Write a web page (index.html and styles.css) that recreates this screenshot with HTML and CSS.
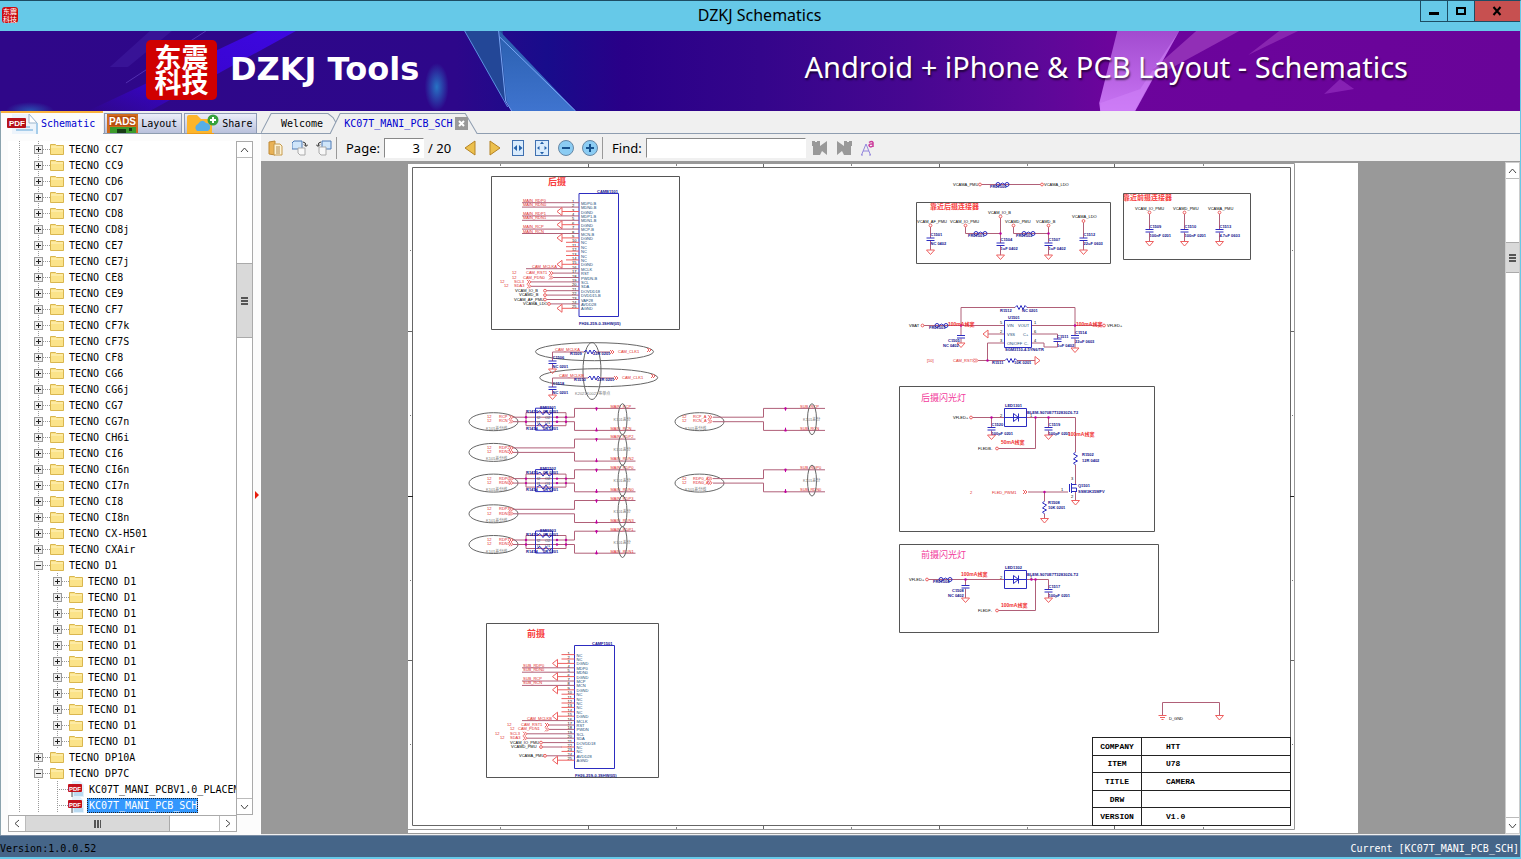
FILE: index.html
```html
<!DOCTYPE html>
<html lang="en">
<head>
    <meta charset="UTF-8">
    <meta name="viewport" content="width=device-width, initial-scale=1.0">
    <title>DZKJ Schematics</title>
    <link rel="stylesheet" href="styles.css">
</head>
<body>
    <header class="title-bar">
        <span class="app-icon">东震<br>科技</span>
        <h1>DZKJ Schematics</h1>
        <div class="window-buttons">
            <button aria-label="Minimize"><svg width="10" height="10"><path d="M0 6h10v3H0z"/></svg></button>
            <button aria-label="Maximize"><svg width="10" height="10"><path d="M1 2h8v6H1z" fill="none" stroke="#000" stroke-width="2"/></svg></button>
            <button class="close" aria-label="Close"><svg width="10" height="10"><path d="M1.500 1l7 8M8.500 1l-7 8" stroke="#000" stroke-width="2"/></svg></button>
        </div>
    </header>

    <div class="banner">
        <svg class="banner-art" viewBox="0 0 1521 80" preserveAspectRatio="none">
            <defs>
                <linearGradient id="bg">
                    <stop offset="0" stop-color="#2f0789"/>
                    <stop offset=".3" stop-color="#2d078a"/>
                    <stop offset=".36" stop-color="#180c8b"/>
                    <stop offset=".41" stop-color="#290088"/>
                    <stop offset=".5" stop-color="#34058b"/>
                    <stop offset=".6" stop-color="#470791"/>
                    <stop offset=".68" stop-color="#5b0898"/>
                    <stop offset=".73" stop-color="#6c049c"/>
                    <stop offset="1" stop-color="#690499"/>
                </linearGradient>
                <linearGradient id="ray" x1="1" y1="0" x2="0" y2="1">
                    <stop offset="0" stop-color="#3d08e0"/>
                    <stop offset=".6" stop-color="#3904cf"/>
                    <stop offset="1" stop-color="#3904cf" stop-opacity="0"/>
                </linearGradient>
                <linearGradient id="gem" x1="0" y1="0" x2="0" y2="1">
                    <stop offset="0" stop-color="#2a5fae"/>
                    <stop offset="1" stop-color="#3f74cf"/>
                </linearGradient>
                <linearGradient id="pink" x1="0" y1="0" x2="0" y2="1">
                    <stop offset="0" stop-color="#a24bcf"/>
                    <stop offset="1" stop-color="#c975f4"/>
                </linearGradient>
                <radialGradient id="glow">
                    <stop offset="0" stop-color="#2773c4"/>
                    <stop offset="1" stop-color="#2773c4" stop-opacity="0"/>
                </radialGradient>
            </defs>
            <rect width="1521" height="80" fill="url(#bg)"/>
            <path d="M258 0h38L150 80H88z" fill="url(#ray)"/>
            <path d="M150 0h22L128 36h-18z" fill="#4a2ab0" opacity=".35"/>
            <path d="M206 0L126 52" stroke="#6342c4" opacity=".7"/>
            <ellipse cx="437" cy="56" rx="12" ry="24" fill="url(#glow)"/>
            <ellipse cx="30" cy="80" rx="24" ry="9" fill="url(#glow)" opacity=".7"/>
            <path d="M465 0h38l5 73-8-11z" fill="#234797"/>
            <path d="M465 0l43 76" stroke="#5b92e2" fill="none"/>
            <path d="M500 0l76 80h-64l-5-10z" fill="url(#gem)"/>
            <path d="M500 6l76 74M499 0l7 70 6 10" stroke="#79a6f5" fill="none"/>
            <path d="M1118 0h62l-44 80h-35l-1-8z" fill="url(#pink)"/>
            <path d="M1101 72l40-14 39-58-45 80h-34z" fill="#d184fa" opacity=".5"/>
            <path d="M1197 0h43l-77 42-10-3z" fill="#a646c5" opacity=".65"/>
            <path d="M1280 0h19l-50 24z" fill="#a646c5" opacity=".5"/>
            <path d="M1341 48l14 10-30 5z" fill="#9a35c4" opacity=".6"/>
        </svg>
        <div class="brand">
            <span class="logo">东震<br>科技</span>
            <strong>DZKJ Tools</strong>
        </div>
        <p>Android + iPhone &amp; PCB Layout - Schematics</p>
    </div>

    <main class="workspace">
        <aside class="sidebar">
            <nav class="side-tabs">
                <button class="side-tab active">
                    <svg width="31" height="20" viewBox="0 0 31 20"><path d="M5 0h18l7 8v12H5z" fill="#edf4fb"/><path d="M22 0l8 9h-8z" fill="#fff" stroke="#9bb5cd"/><path d="M30 9v11M9 16h17M9 13h14" stroke="#a7cdea" stroke-width="2"/><rect y="4" width="19" height="10" rx="1" fill="#b7121b"/><text x="2" y="12" class="pdf-text">PDF</text></svg>
                    Schematic
                </button>
                <button class="side-tab">
                    <svg width="31" height="19" viewBox="0 0 31 19"><rect width="31" height="19" fill="#cf6a1d"/><path d="M2 2h27v10H2z" fill="#b84e0e"/><text x="2" y="11" class="pads-text">PADS</text><path d="M3 13h26v6H3z" fill="#3b9b2c"/><path d="M10 15h9v4h-9zM22 14h3v3h-3z" fill="#173c16"/></svg>
                    Layout
                </button>
                <button class="side-tab">
                    <svg width="32" height="20" viewBox="0 0 32 20"><path d="M0 3q0-2 2-2h8l4 4h11v15H0z" fill="#fdb52b"/><path d="M0 19h27v1H0z" fill="#e99a1b"/><path d="M10 17a4 4 0 0 1 1-7q4-6 8-1 5 0 4 6l-2 2z" fill="#56aee8"/><circle cx="26" cy="6" r="5.500" fill="#36a13c"/><path d="M26 3v6M23 6h6" stroke="#fff" stroke-width="2"/></svg>
                    Share
                </button>
            </nav>
            <div class="side-body">
                <div class="tree-box">
                    <ul class="tree" id="tree"></ul>
                    <div class="scrollbar vertical">
                        <button aria-label="Scroll up"><svg width="9" height="6"><path d="M1 5l3.500-4L8 5"/></svg></button>
                        <div class="track"><div class="thumb"></div></div>
                        <button aria-label="Scroll down"><svg width="9" height="6"><path d="M1 1l3.500 4L8 1"/></svg></button>
                    </div>
                </div>
                <div class="scrollbar horizontal">
                    <button aria-label="Scroll left"><svg width="6" height="9"><path d="M5 1L1 4.500 5 8"/></svg></button>
                    <div class="track"><div class="thumb"></div></div>
                    <button aria-label="Scroll right"><svg width="6" height="9"><path d="M1 1l4 3.500L1 8"/></svg></button>
                </div>
            </div>
            <span class="splitter"></span>
        </aside>

        <section class="content">
            <nav class="doc-tabs">
                <button class="doc-tab">
                    <svg viewBox="0 0 76 20" preserveAspectRatio="none"><path d="M0 20L10 .500h56l5 4 5 9"/></svg>
                    <span>Welcome</span>
                </button>
                <button class="doc-tab active">
                    <svg viewBox="0 0 146 20" preserveAspectRatio="none"><path d="M0 20L10 .500h124L146 20"/></svg>
                    <span>KC07T_MANI_PCB_SCH</span>
                    <i class="tab-close"><svg width="13" height="13"><path d="M4 4l5 5M9 4L4 9" stroke="#fff" stroke-width="2"/></svg></i>
                </button>
            </nav>

            <div class="toolbar">
                <button class="tool" aria-label="Copy"><svg width="16" height="16"><path d="M1 2l6-1v14l-6-1z" fill="#e9b256" stroke="#c08a37"/><path d="M6 4h6l2 2v9H6z" fill="#fdf3d5" stroke="#c69a4c"/><path d="M8 7h4M8 9h4M8 11h4M8 13h4" stroke="#b08a50"/></svg></button>
                <button class="tool" aria-label="Rotate right"><svg width="16" height="16"><path d="M2 1h8v8H0V3z" fill="#cfe5fa" stroke="#4e7bb5"/><path d="M6 8h7v7H8l-2-2z" fill="#f8f8f8" stroke="#aaa"/><path d="M11 2q3 0 3 4M12 4.500l2 2 2-2" fill="none" stroke="#333"/></svg></button>
                <button class="tool" aria-label="Rotate left"><svg width="16" height="16"><path d="M6 1h9v8H8L6 7z" fill="#cfe5fa" stroke="#4e7bb5"/><path d="M3 7h7v8H5l-2-2z" fill="#f8f8f8" stroke="#aaa"/><path d="M5 2Q2 2 2 6M0 4.500l2 2 2-2" fill="none" stroke="#333"/></svg></button>
                <span class="separator"></span>
                <label for="page">Page:</label>
                <input type="text" id="page" value="3">
                <span class="total">/ 20</span>
                <button class="tool" aria-label="Previous page"><svg width="16" height="16"><path d="M13 1v14L3 8z" fill="#ecc04e" stroke="#b58324"/></svg></button>
                <button class="tool" aria-label="Next page"><svg width="16" height="16"><path d="M4 1v14l10-7z" fill="#ecc04e" stroke="#b58324"/></svg></button>
                <button class="tool" aria-label="Fit width"><svg width="16" height="16"><rect x="2.500" y=".500" width="11" height="15" fill="#d9ebfc" stroke="#3f70b0"/><path d="M7 5v6L3.500 8zM9 5v6l3.500-3z" fill="#2461aa"/></svg></button>
                <button class="tool" aria-label="Fit page"><svg width="16" height="16"><rect x="1.500" y=".500" width="13" height="15" fill="#d9ebfc" stroke="#3f70b0"/><path d="M8 1.500L10 4H6zM8 14.500L6 12h4zM3 8l2.500-2v4zM13 8l-2.500-2v4z" fill="#2461aa"/></svg></button>
                <button class="tool" aria-label="Zoom out"><svg width="16" height="16"><circle cx="8" cy="8" r="7.500" fill="#8bccf3" stroke="#6788a5"/><path d="M4 8h8" stroke="#16518c" stroke-width="2"/></svg></button>
                <button class="tool" aria-label="Zoom in"><svg width="16" height="16"><circle cx="8" cy="8" r="7.500" fill="#8bccf3" stroke="#6788a5"/><path d="M4 8h8M8 4v8" stroke="#16518c" stroke-width="2"/></svg></button>
                <span class="separator"></span>
                <label for="find">Find:</label>
                <input type="text" id="find">
                <button class="tool" aria-label="Find previous"><svg width="16" height="16"><path d="M0 1h3v1h2V1h3v5l7-5v14l-5-4-2 4H1V6H0z" fill="#999"/></svg></button>
                <button class="tool" aria-label="Find next"><svg width="16" height="16"><path d="M16 1h-3v1h-2V1H8v5L1 1v14l5-4 2 4h7V6h1z" fill="#999"/></svg></button>
                <button class="tool" aria-label="Match case"><svg width="16" height="16"><path d="M1.500 15L6 4l4.500 11M3 11h6M1 15h2M9 15h2" fill="none" stroke="#9285dc"/><path d="M9 2.500q3-2 4 0V7M13 4q-4-.500-4 1.500Q10 8 13 6" fill="none" stroke="#cc3b9b" stroke-width="1.500"/></svg></button>
            </div>

            <div class="viewer">
                <div class="canvas">
                    <div class="sheet">
                        <svg class="schematic" id="schematic" viewBox="408 163 950 670"></svg>
                        <table class="title-block">
                            <tr><th>COMPANY</th><td>HTT</td></tr>
                            <tr><th>ITEM</th><td>U78</td></tr>
                            <tr><th>TITLE</th><td>CAMERA</td></tr>
                            <tr><th>DRW</th><td></td></tr>
                            <tr><th>VERSION</th><td>V1.0</td></tr>
                        </table>
                    </div>
                </div>
                <div class="scrollbar vertical">
                    <button aria-label="Page up"><svg width="9" height="6"><path d="M1 5l3.500-4L8 5"/></svg></button>
                    <div class="track"><div class="thumb"></div></div>
                    <button aria-label="Page down"><svg width="9" height="6"><path d="M1 1l3.500 4L8 1"/></svg></button>
                </div>
            </div>
        </section>
    </main>

    <footer class="status-bar">
        <span class="version">Version:1.0.0.52</span>
        <span>Current [KC07T_MANI_PCB_SCH]</span>
    </footer>

    <script src="script.js"></script>
</body>
</html>
```

FILE: styles.css
```css
* {
    box-sizing: border-box;
}

body {
    margin: 0;
    height: 100vh;
    display: flex;
    flex-direction: column;
    overflow: hidden;
    background-color: #f0f0f0;
    border-top: 1px solid #1d4c63;
    border-right: 1px solid #66c9e8;
    border-bottom: 2px solid #66c9e8;
    font-family: "DejaVu Sans Mono", "Noto Sans CJK SC", monospace;
    font-size: 10px;
    color: #000;
}

button {
    margin: 0;
    padding: 0;
    border: none;
    background: none;
    font: inherit;
    color: inherit;
}

svg {
    display: block;
    flex: none;
}

/* Title bar */
.title-bar {
    flex: none;
    height: 30px;
    display: flex;
    justify-content: space-between;
    background-color: #66c9e8;
}

.title-bar h1 {
    margin: 0;
    font: 16px/29px "Noto Sans", sans-serif;
}

.app-icon {
    width: 16px;
    height: 16px;
    margin: 6px 81px 0 2px;
    border-radius: 3px;
    background-color: #cc0c10;
    color: #fff;
    font: 7px/8px "Noto Sans CJK SC", sans-serif;
    text-align: center;
}

.window-buttons {
    display: flex;
    height: 21px;
    border: 1px solid #1d4c63;
    border-top: none;
    border-right: none;
}

.window-buttons button {
    width: 27px;
    display: flex;
    align-items: center;
    justify-content: center;
    border-right: 1px solid #1d4c63;
}

.window-buttons .close {
    width: 45px;
    border-right: none;
    background-color: #c75050;
}

/* Banner */
.banner {
    position: relative;
    flex: none;
    height: 80px;
    display: flex;
    align-items: center;
    justify-content: space-between;
    padding: 0 112px 0 146px;
    color: #fff;
}

.banner-art {
    position: absolute;
    left: 0;
    top: 0;
    width: 100%;
    height: 100%;
}

.brand {
    position: relative;
    display: flex;
    align-items: flex-start;
    gap: 13px;
    margin-bottom: 2px;
}

.brand strong {
    font: bold 32px/58px "DejaVu Sans", sans-serif;
}

.logo {
    width: 71px;
    height: 60px;
    padding: 4px 0;
    border-radius: 5px;
    background-color: #d00000;
    font: bold 27px/25px "Noto Sans CJK SC", sans-serif;
    text-align: center;
}

.banner p {
    position: relative;
    margin: 0 0 9px;
    font: 29px/40px "Noto Sans", sans-serif;
    text-shadow: 1px 2px 2px rgba(0, 0, 0, 0.6);
}

/* Workspace */
.workspace {
    flex: 1;
    min-height: 0;
    display: flex;
}

.sidebar {
    position: relative;
    flex: none;
    width: 261px;
    display: flex;
    flex-direction: column;
    border-left: 1px solid #8ba3ae;
}

.side-tabs {
    flex: none;
    height: 23px;
    display: flex;
    align-items: flex-end;
    gap: 2px;
    border-bottom: 1px solid #8e9db0;
}

.side-tab {
    height: 20px;
    display: flex;
    align-items: center;
    gap: 3px;
    padding: 0 4px 0 2px;
    border: 1px solid #8e9bb5;
    border-bottom: none;
    background: linear-gradient(#eceef9, #b9c1dc);
}

.side-tab.active {
    height: 23px;
    margin-bottom: -1px;
    margin-right: -1px;
    padding: 0 8px 0 6px;
    border: none;
    border-top: 2px solid #f9b13c;
    background: #fcfcfc;
    color: #0000d0;
}

.pdf-text {
    font: bold 8px "Liberation Sans", sans-serif;
    fill: #fff;
}

.pads-text {
    font: bold 10px "Liberation Sans", sans-serif;
    fill: #fff;
}

.side-body {
    flex: 1;
    min-height: 0;
    padding: 7px 7px 3px;
    background-color: #fcfcfc;
    border-right: 1px solid #fff;
}

.side-body,
.tree-box {
    display: flex;
    flex-direction: column;
}

.tree-box {
    flex: 1;
    min-height: 0;
    flex-direction: row;
    background-color: #fff;
}

.tree {
    flex: 1;
    min-width: 0;
    margin: 0;
    padding: 0;
    overflow: hidden;
    list-style: none;
}

.tree li {
    height: 16px;
    display: flex;
    align-items: center;
    padding-left: 26px;
    white-space: pre;
    background:
        repeating-linear-gradient(#999 0 1px, transparent 1px 2px) 11px 0 / 1px 100% no-repeat,
        repeating-linear-gradient(#999 0 1px, transparent 1px 2px) 30px 0 / 1px 100% no-repeat;
}

.tree .level-2 {
    padding-left: 45px;
    background:
        repeating-linear-gradient(#999 0 1px, transparent 1px 2px) 11px 0 / 1px 100% no-repeat,
        repeating-linear-gradient(#999 0 1px, transparent 1px 2px) 30px 0 / 1px 100% no-repeat,
        repeating-linear-gradient(#999 0 1px, transparent 1px 2px) 49px 0 / 1px 100% no-repeat;
}

.tree .expander {
    flex: none;
    width: 9px;
    height: 9px;
}

.tree .dots {
    flex: none;
    width: 7px;
    height: 1px;
    background: repeating-linear-gradient(90deg, #999 0 1px, transparent 1px 2px);
}

.tree .file .dots {
    width: 11px;
    margin-left: 4px;
}

.tree .name {
    margin-left: 3px;
    padding: 0 1px 0 2px;
    line-height: 15px;
}

.tree .selected .name {
    background-color: #3397fd;
    color: #fff;
    outline: 1px dotted #222;
    outline-offset: -1px;
}

/* Scrollbars */
.scrollbar {
    flex: none;
    display: flex;
    background-color: #fff;
    border: 1px solid #aaa;
}

.scrollbar button {
    flex: none;
    display: flex;
    align-items: center;
    justify-content: center;
}

.scrollbar button path {
    fill: none;
    stroke: #444;
    stroke-width: 1;
}

.scrollbar .track {
    flex: 1;
    min-height: 0;
    border: 0 solid #bbb;
}

.scrollbar .thumb {
    display: flex;
    background-color: #d9d9d9;
    border: 0 solid #aaa;
}

.scrollbar .thumb::after {
    content: "";
    width: 7px;
    height: 8px;
    margin: auto;
    background: repeating-linear-gradient(#555 0 2px, transparent 2px 3px);
}

.vertical {
    width: 17px;
    flex-direction: column;
}

.vertical button {
    height: 15px;
}

.vertical .track {
    padding-top: 105px;
    border-width: 1px 0;
}

.vertical .thumb {
    height: 75px;
    border-width: 1px 0;
}

.horizontal {
    height: 17px;
    margin-right: 16px;
}

.horizontal button {
    width: 16px;
}

.horizontal .track {
    border-width: 0 1px;
}

.horizontal .thumb {
    width: 144px;
    height: 15px;
    border-right-width: 1px;
}

.horizontal .thumb::after {
    background: repeating-linear-gradient(90deg, #555 0 2px, transparent 2px 3px);
}

.splitter {
    position: absolute;
    right: 2px;
    top: 380px;
    border: 4px solid transparent;
    border-left-color: #e81c0c;
    border-right: none;
}

/* Document area */
.content {
    flex: 1;
    min-width: 0;
    display: flex;
    flex-direction: column;
}

.doc-tabs {
    flex: none;
    height: 23px;
    display: flex;
    align-items: flex-end;
    border-bottom: 1px solid #8e9db0;
}

.doc-tab {
    position: relative;
    height: 20px;
    display: flex;
    align-items: center;
    padding: 0 15px 0 20px;
}

.doc-tab > svg {
    position: absolute;
    left: 0;
    top: 0;
    width: 100%;
    height: 100%;
    fill: #f0f0f0;
    stroke: #8e9db0;
}

.doc-tab span {
    position: relative;
}

.doc-tab.active {
    height: 21px;
    margin: 0 0 -1px -8px;
    padding: 0 10px 0 14px;
    color: #0000d0;
}

.tab-close {
    position: relative;
    margin-left: 2px;
    background-color: #999;
}

.toolbar {
    flex: none;
    height: 28px;
    display: flex;
    align-items: center;
    padding-left: 3px;
    border-bottom: 1px solid #999;
    font: 13px "Noto Sans", sans-serif;
}

.tool {
    width: 24px;
    height: 24px;
    display: flex;
    align-items: center;
    justify-content: center;
}

.separator {
    width: 1px;
    height: 22px;
    margin-right: 9px;
    background-color: #999;
}

.toolbar input {
    height: 20px;
    margin: 0 4px;
    padding: 0 3px;
    border: 1px solid #888;
    border-right-color: #fff;
    border-bottom-color: #fff;
    background-color: #fff;
    font: inherit;
    text-align: right;
}

#page {
    width: 40px;
}

#find {
    width: 160px;
    margin-right: 2px;
    text-align: left;
}

.total {
    margin-right: 7px;
}

.viewer {
    flex: 1;
    min-height: 0;
    display: flex;
    margin-bottom: 1px;
    background-color: #999;
}

.canvas {
    flex: 1;
    min-width: 0;
    overflow: hidden;
    padding-top: 1px;
}

.sheet {
    position: relative;
    max-width: 950px;
    margin: 0 auto;
    background-color: #fff;
}

.viewer .scrollbar {
    width: 15px;
    border-color: #ccc;
}

.viewer .track {
    padding-top: 63px;
}

.viewer .thumb {
    height: 31px;
}

.schematic {
    width: 100%;
    height: auto;
    fill: none;
    stroke-width: 1;
}

.schematic text {
    stroke: none;
    font-family: "Liberation Sans", "Noto Sans CJK SC", sans-serif;
    font-size: 4px;
}

.schematic .red { fill: #e02828; }
.schematic .black { fill: #000; }
.schematic .blue { fill: #10108c; font-weight: bold; }
.schematic .teal { fill: #164a78; }
.schematic .gray { fill: #777; }
.schematic .note { fill: #f03030; font-size: 5px; font-weight: bold; }
.schematic .heading { fill: #f84040; font-size: 7px; font-weight: bold; }
.schematic .title { fill: #f84040; font-size: 9px; font-weight: bold; font-family: "Noto Sans CJK SC", sans-serif; }
.schematic .pink { fill: #f23c9c; font-size: 9px; }

/* Title block of the drawing sheet */
.title-block {
    position: absolute;
    right: 67px;
    bottom: 7px;
    width: 199px;
    height: 89px;
    border-collapse: collapse;
    font: bold 8px/15px "Liberation Mono", monospace;
}

.title-block th,
.title-block td {
    padding: 0;
    border: 1px solid #222;
}

.title-block th {
    width: 49px;
}

.title-block td {
    padding-left: 24px;
}

/* Status bar */
.status-bar {
    flex: none;
    height: 22px;
    display: flex;
    justify-content: space-between;
    align-items: center;
    padding: 4px 1px 0 0;
    border-top: 1px solid #7a8da5;
    background-color: #456588;
    color: #fff;
}

.version {
    color: #000;
}
```

FILE: script.js
```js
// ---- Tree ----
const models = ['CC7', 'CC9', 'CD6', 'CD7', 'CD8', 'CD8j', 'CE7', 'CE7j', 'CE8', 'CE9', 'CF7', 'CF7k', 'CF7S',
    'CF8', 'CG6', 'CG6j', 'CG7', 'CG7n', 'CH6i', 'CI6', 'CI6n', 'CI7n', 'CI8', 'CI8n', 'CX-H501', 'CXAir'];

const folderIcon = '<svg width="14" height="12"><path d="M.5 1.500h5l1 1h7v9H.5z" fill="#fbe389" stroke="#d9b64f"/><path d="M1 4h12" stroke="#fff3c0"/></svg>';
const pdfIcon = '<svg width="16" height="16"><path d="M4 0h8l4 4v12H4z" fill="#e3f0fa"/><path d="M6 12h9M6 14h9" stroke="#8fc3e6"/><path d="M4 11v5" stroke="#555"/><rect y="3" width="14" height="8" rx="1" fill="#c3131c"/><text x="1" y="9.500" style="font-size:6px" class="pdf-text">PDF</text></svg>';

const tree = document.getElementById('tree');

function addRow(name, level, type) {
    const li = document.createElement('li');
    li.className = 'level-' + level + (type ? ' ' + type : '');
    let html = '';
    if (type && type.includes('file')) {
        html = '<span class="dots"></span>' + pdfIcon;
    } else {
        const plus = type === 'open' ? '' : 'M4.500 2v5';
        html = `<svg class="expander"><rect x=".5" y=".5" width="8" height="8" fill="#f0f0f0" stroke="#999"/><path d="M2 4.500h5${plus}" stroke="#222"/></svg>
            <span class="dots"></span>`.replace(/>\s+</g, '><') + folderIcon;
    }
    li.innerHTML = html + `<span class="name">${name}</span>`;
    tree.appendChild(li);
}

models.forEach(m => addRow('TECNO ' + m, 1));
addRow('TECNO D1', 1, 'open');
for (let i = 0; i < 11; i++) addRow('TECNO D1', 2);
addRow('TECNO DP10A', 1);
addRow('TECNO DP7C', 1, 'open');
addRow('KC07T_MANI_PCBV1.0_PLACEM', 2, 'file');
addRow('KC07T_MANI_PCB_SCH', 2, 'file selected');

// ---- Schematic drawing ----
const WIRE = '#b06078', RED = '#ee6060', BLUE = '#2c2cc0', DARK = '#555', NODE = '#c000a0';
let out = '';

function path(d, color = WIRE, fill = 'none') {
    out += `<path d="${d}" stroke="${color}" fill="${fill}"/>`;
}
function text(x, y, str, cls = 'blue') {
    out += `<text x="${x}" y="${y}" class="${cls}">${str}</text>`;
}
function rect(x1, y1, x2, y2, color = DARK) {
    path(`M${x1} ${y1}H${x2}V${y2}H${x1}z`, color);
}
function ellipse(cx, cy, rx, ry) {
    out += `<ellipse cx="${cx}" cy="${cy}" rx="${rx}" ry="${ry}" stroke="#666"/>`;
}
function node(x, y) {
    out += `<circle cx="${x}" cy="${y}" r="1.2" fill="${NODE}"/>`;
}
function term(x, y) {
    out += `<circle cx="${x}" cy="${y}" r="1.4" stroke="${RED}" fill="#fff"/>`;
}
function gnd(x, y) {
    path(`M${x - 4} ${y}h8l-4 4.500z`, RED);
}
function gndLeft(x, y) {
    path(`M${x} ${y - 4}v8l-5 -4z`, RED);
}
function port(x, y) {
    path(`M${x} ${y - 2}l2 2-2 2M${x + 2} ${y - 2}l2 2-2 2`, RED);
}
function cap(x, y, name, value, top, bottom) {
    path(`M${x} ${top}V${y - 1}M${x} ${y + 2}V${bottom}`);
    path(`M${x - 4} ${y - 1}h8M${x - 4} ${y + 1.5}h8`, BLUE);
    gnd(x, bottom);
    text(x, y - 3, name);
    text(x, y + 6, value);
}
function resistor(x, y) {
    path(`M${x} ${y}l2-2 2 4 2-4 2 4 2-4 2 2`, BLUE);
}
function resistorV(x, y) {
    path(`M${x} ${y}l-2 2 4 2-4 3 4 2-4 2 2 2`, BLUE);
}
function bead(x, y, name) {
    out += `<circle cx="${x + 2}" cy="${y}" r="2" stroke="${BLUE}"/><circle cx="${x + 11}" cy="${y}" r="2" stroke="${BLUE}"/>`;
    path(`M${x + 4} ${y}q2.500-3 5 0`, BLUE);
    text(x - 6, y + 3, name);
}

// Sheet frame and zone marks
rect(412.5, 167.5, 1290.5, 825.5, '#666');
path('M408 163.500H1294.500V829.500H408', '#999');
[500.5, 676.5, 851.5, 1027.5, 1203.5].forEach(x => path(`M${x} 164v2M${x} 827v2`, '#888'));
[588.5, 763.5, 939.5, 1114.5].forEach(x => path(`M${x} 164v4M${x} 825v4`, '#666'));
[331.5, 660.5].forEach(y => path(`M408 ${y}h4M1290 ${y}h4`, '#666'));
[250.5, 415.5, 580.5, 744.5].forEach(y => path(`M410 ${y}h1M1292 ${y}h1`, '#777'));
path('M408 496.500h5M1290 496.500h4', '#222');

// Camera connectors: one entry per pin, [pin, kind, net, netX, startX, numberX]
function connector(x, y, pins) {
    pins.forEach(([label, kind, net, netX, startX, numX], i) => {
        const py = +(y + i * 4.4).toFixed(1);
        text(x + 2, py + 2, label, 'teal');
        text(x - 7, py, i + 1, 'black');
        if (kind === 'gnd') {
            path(`M${x - 17} ${py}H${x}`, RED);
            gndLeft(x - 17, py);
        } else if (kind === 'nc') {
            path(`M${x - 13} ${py}H${x}`, RED);
        } else {
            path(`M${startX} ${py}H${x}`);
            text(netX, kind === 'net' ? py - 1 : py + 1, net, kind === 'term' ? 'black' : 'red');
            if (kind === 'term') term(startX, py);
            if (kind === 'port') {
                port(startX - 4, py);
                text(numX, py + 1, '12', 'red');
            }
        }
    });
}

const nc = ['NC', 'nc'];
const dgnd = ['DGND', 'gnd'];

rect(491.5, 176.5, 679.5, 329.5);
text(548, 185, '后摄', 'title');
rect(579, 193.5, 618.5, 316.5, BLUE);
text(597, 193, 'CAMB1501');
text(579, 325, 'FH26-25S-0.3SHW(05)');
connector(579, 202.7, [
    ['MDP0-B', 'net', 'MAIN_RDP0', 523, 522], ['MDN0-B', 'net', 'MAIN_RDN0', 523, 522], dgnd,
    ['MDP1-B', 'net', 'MAIN_RDP1', 523, 522], ['MDN1-B', 'net', 'MAIN_RDN1', 523, 522], dgnd,
    ['MCP-B', 'net', 'MAIN_RCP', 523, 522], ['MCN-B', 'net', 'MAIN_RCN', 523, 522], dgnd,
    nc, nc, nc, nc, nc, dgnd,
    ['MCLK', 'net', 'CAM_MCLKA', 532, 526],
    ['RST', 'port', 'CAM_RST1', 526, 553, 512], ['PWDN-B', 'port', 'CAM_PDN0', 523, 553, 512],
    ['SCL', 'port', 'SCL3', 514, 531, 500], ['SDA', 'port', 'SDA3', 514, 531, 504],
    ['DOVDD18', 'term', 'VCAM_IO_B', 515, 545], ['DVDD15-B', 'term', 'VCAMD_B', 519, 545],
    ['VAF28', 'term', 'VCAM_AF_PMU', 514, 545], ['AVDD28', 'term', 'VCAMA_LDO', 523, 549],
    ['AGND', 'gnd']
]);

rect(486.5, 623.5, 658.5, 777.5);
text(527, 637, '前摄', 'title');
rect(574.5, 645.5, 614.5, 768.5, BLUE);
text(592, 645, 'CAMF1501');
text(575, 777, 'FH26-25S-0.3SHW(05)');
connector(574.5, 654.6, [
    nc, nc, dgnd,
    ['MDP0', 'net', 'SUB_RDP0', 523, 522], ['MDN0', 'net', 'SUB_RDN0', 523, 522], dgnd,
    ['MCP', 'net', 'SUB_RCP', 523, 522], ['MCN', 'net', 'SUB_RCN', 523, 522], dgnd,
    nc, nc, nc, nc, nc, dgnd,
    ['MCLK', 'net', 'CAM_MCLKB', 527, 522],
    ['RST', 'port', 'CAM_RST1', 521, 549, 507], ['PWDN', 'port', 'CAM_PDN1', 518, 549, 510],
    ['SCL', 'port', 'SCL3', 510, 527, 495], ['SDA', 'port', 'SDA3', 510, 527, 500],
    ['DOVDD18', 'term', 'VCAM_IO_PMU', 510, 541], nc, nc,
    ['AVDD28', 'term', 'VCAMA_PMU', 519, 545], ['AGND', 'gnd']
]);
text(511, 748, 'VCAMD_PMU', 'black');
path('M541 747H562');
term(541, 747);

// Camera clocks
ellipse(594.5, 351.7, 59, 9);
ellipse(598.7, 377.7, 59, 9);
ellipse(592, 371, 9, 28.5);
[['CAM_MCLKA', 'R1509', 'C1506', 0, 0], ['CAM_MCLKB', 'R1510', 'C1518', 4, 26]].forEach(([net, r, c, dx, dy]) => {
    path(`M552.500 ${352 + dy}H${584 + dx}M${596 + dx} ${352 + dy}h14`);
    resistor(584 + dx, 352 + dy);
    port(610 + dx, 352 + dy);
    port(647 + dx, 350 + dy);
    text(555 + dx, 351 + dy, net, 'red');
    text(570 + dx, 355 + dy, r);
    text(593 + dx, 355 + dy, '22R 0201');
    text(618 + dx, 353 + dy, 'CAM_CLK1', 'red');
    cap(552.5, 362 + dy, c, 'NC 0201', 352 + dy, 369 + dy);
});
text(575, 395, 'K2021K0021等单点', 'gray');

// Differential pairs
function pair(x, c, w, names, nets, endX) {
    ellipse(x + 24.5, c, 24.5, 9);
    names.forEach((n, i) => {
        const y = c - 4.5 + i * 4.2;
        text(x + (n.length > 4 ? 7 : 18), y + 1, '12', 'red');
        text(x + 30 - (n.length > 4 ? 12 : 0), y + 1, n, 'red');
        port(x + 40 - (n.length > 4 ? 7 : 0), y);
    });
    text(x + (names[0].length > 4 ? 10 : 17), c + 8, 'K101差分线', 'gray');
    path(`M${x + 38 + (names[0].length > 4 ? 0 : 6)} ${c - 4.5}H${w}V${c - 13.3}H${endX}M${x + 38 + (names[0].length > 4 ? 0 : 6)} ${c}H${w}V${c + 8.7}H${endX}`);
    const nx = w + 22;
    node(nx, c - 13.3);
    node(nx, c + 8.7);
    path(`M${nx} ${c - 14}v3M${nx} ${c + 9}v-3`, NODE);
    text(endX - 25, c - 14, nets[0], 'red');
    text(endX - 25, c + 8, nets[1], 'red');
    ellipse(endX - 13, c - 2.5, 4.5, 15.5);
    text(endX - 22, c - 1, 'K101差分', 'gray');
}

function filter(c, name) {
    path(`M526 ${c - 9}H566V${c + 4}H526z`);
    rect(535.5, c - 13.5, 552.5, c + 8.5, BLUE);
    path(`M537 ${c - 9}l3-2 3 4 3-4 3 4 3-2M537 ${c + 4}l3-2 3 4 3-4 3 4 3-2`, BLUE);
    text(540, c - 13, name);
    text(526, c - 9, 'R1413');
    text(543, c - 9, '0R 0201');
    text(526, c + 8, 'R1414');
    text(543, c + 8, '0R 0201');
    text(537, c - 3, 'I2', 'teal');
    text(545, c - 3, 'O2', 'teal');
    text(537, c + 2, 'I1', 'teal');
    text(545, c + 2, 'O1', 'teal');
    [526, 557, 566].forEach(x => {
        node(x, c - 4.5);
        node(x, c);
    });
}

[['RCP', 'RCN'], ['RDP2', 'RDN2'], ['RDP0', 'RDN0'], ['RDP3', 'RDN3'], ['RDP1', 'RDN1']].forEach((n, i) => {
    const c = +(421.7 + i * 30.7).toFixed(1);
    pair(469, c, 574.5, n, n.map(s => 'MAIN_' + s), 635.5);
    if (i % 2 === 0) filter(c, 'EMI150' + (i / 2 + 1));
});
pair(675, 421.7, 763.5, ['RCP_A', 'RCN_A'], ['SUB_RCP', 'SUB_RCN'], 825);
pair(675, 483.1, 763.5, ['RDP0_A', 'RDN0_A'], ['SUB_RDP0', 'SUB_RDN0'], 825);

// Supply filtering
text(953, 186, 'VCAMA_PMU', 'black');
path('M980 184.500H1042');
term(980, 184.5);
term(1042, 184.5);
bead(996, 184.5, 'FR01500');
text(1044, 186, 'VCAMA_LDO', 'black');

rect(916.5, 202.5, 1110.5, 263.5);
text(930, 209, '靠近后摄连接器', 'heading');
function supply(x, y, net, netX, capY, name, value, bottom) {
    text(netX, y - 3, net, 'black');
    cap(x, capY, name, value, y, bottom);
    term(x, y);
}
supply(930.5, 225.5, 'VCAM_AF_PMU', 917, 239, 'C1501', 'NC 0402', 250);
supply(1000.5, 216.5, 'VCAM_IO_B', 988, 244, 'C1504', '1uF 0402', 255);
supply(1048.5, 225.5, 'VCAMD_B', 1036, 244, 'C1507', '1uF 0402', 255);
supply(1083.5, 221, 'VCAMA_LDO', 1072, 239, 'C1512', '22uF 0603', 250);
text(950, 223, 'VCAM_IO_PMU', 'black');
text(1005, 223, 'VCAMD_PMU', 'black');
path('M965.500 226V233.500H1000.500M1013.500 226V233.500H1048.500');
term(965.5, 225.5);
term(1013.5, 225.5);
bead(974, 233.5, 'FR01501');
bead(1022, 233.5, 'FR01502');
node(1000.5, 233.5);
node(1048.5, 233.5);

rect(1123.5, 193.5, 1250.5, 259.5);
text(1123, 200, '靠近前摄连接器', 'heading');
supply(1149.5, 212.5, 'VCAM_IO_PMU', 1135, 230.5, 'C1509', '100nF 0201', 241.5);
supply(1184.5, 212.5, 'VCAMD_PMU', 1173, 230.5, 'C1510', '100nF 0201', 241.5);
supply(1219.5, 212.5, 'VCAMA_PMU', 1208, 230.5, 'C1513', '4.7uF 0603', 241.5);

// Charge pump
path('M922 325.500H1004M961 325.500V307.500H1015M1027 307.500H1075V325.500M1032 325.500H1104');
path('M1032 334H1057.500V339M1057.500 342V347H1044V343H1032M1005 334H988M1005 343H987.500V360.500M978 360.500H1005M1017 360.500H1035');
path('M1053.500 339h8M1053.500 341.500h8', BLUE);
path('M1035 356.500v8l5-4z', RED);
rect(1004.5, 320.5, 1031.5, 347.5, BLUE);
resistor(1015, 307.5);
resistor(1005, 360.5);
gndLeft(988, 334);
port(974, 360.5);
cap(961, 336.5, '', '', 325.5, 343);
cap(1075, 336.5, 'C1514', '22uF 0603', 325.5, 348);
term(922.5, 325.5);
term(1104, 325.5);
bead(935, 325.5, 'FR01503');
node(961, 325.5);
node(1075, 325.5);
node(987.5, 360.5);
text(909, 327, 'VBAT', 'black');
text(948, 326, '100mA线宽', 'note');
text(1076, 326, '100mA线宽', 'note');
text(1107, 327, 'VFLED+', 'black');
text(1000, 312, 'R1512');
text(1022, 312, 'NC 0201');
text(1008, 319, 'U1501');
text(1005, 351, 'SGM3110-4.5YN6/TR');
text(1007, 327, 'VIN', 'teal');
text(1018, 327, 'VOUT', 'teal');
text(1007, 336, 'VSS', 'teal');
text(1023, 336, 'C+', 'teal');
text(1007, 345, 'ON/OFF', 'teal');
text(1024, 345, 'C-', 'teal');
[5, 2, 3].forEach((n, i) => text(1000, 324 + i * 9, n, 'black'));
[1, 6, 4].forEach((n, i) => text(1034, 324 + i * 9, n, 'black'));
text(948, 342, 'C1505');
text(943, 347, 'NC 0402');
text(1057, 338, 'C1511');
text(1057, 347, '1uF 0402');
text(992, 364, 'R1511');
text(1014, 364, '10K 0201');
text(927, 362, '[10]', 'red');
text(953, 362, 'CAM_RSTX', 'red');

// Rear flash
function led(y, name) {
    rect(1004.5, y - 9, 1026.5, y + 9, BLUE);
    path(`M1005 ${y}h21M1013.500 ${y - 4}v8l5-4zM1018.500 ${y - 4}v8`, BLUE);
    text(1005, y - 11, name);
    text(1027, y - 4, 'BLEM-S070E7T32830Z6-T2');
    text(1000, y - 1, '2', 'black');
    text(1030, y - 1, '1', 'black');
}
rect(899.5, 386.5, 1154.5, 531.5);
text(921, 401, '后摄闪光灯', 'pink');
path('M971 417.500H1004M1027 417.500H1075.500V452M1035.500 417.500V448.500H998M1075.500 465V484M1075.500 492V501M1028 492H1068M1044.500 492V501M1044.500 514v4');
led(417.5, 'LED1301');
cap(991.5, 428.5, 'C1520', '100pF 0201', 417.5, 435);
cap(1048.5, 428.5, 'C1519', '100pF 0201', 417.5, 435);
term(971, 417.5);
term(997, 448.5);
[991.5, 1035.5, 1048.5].forEach(x => node(x, 417.5));
resistorV(1075.5, 452);
resistorV(1044.5, 501);
path('M1069.500 484v8M1071.500 483v10M1071.500 484.500h5M1071.500 491.500h5M1071.500 488h5v4', BLUE);
gnd(1075.5, 500.5);
gnd(1044.5, 518.5);
port(1023, 492);
node(1044.5, 492);
text(953, 419, 'VFLED+', 'black');
text(1068, 436, '100mA线宽', 'note');
text(1001, 444, '50mA线宽', 'note');
text(978, 450, 'FLEDB-', 'black');
text(1082, 456, 'R1502');
text(1082, 462, '12R 0402');
text(1078, 487, 'Q1501');
text(1078, 493, 'SSM3K35MFV');
text(1048, 504, 'R1508');
text(1048, 509, '10K 0201');
text(1061, 491, '1', 'black');
text(1071, 480, '3', 'black');
text(1071, 498, '2', 'black');
text(970, 494, '2', 'red');
text(992, 494, 'FLED_PWM1', 'red');

// Front flash
rect(899.5, 544.5, 1158.5, 632.5);
text(921, 558, '前摄闪光灯', 'pink');
path('M927 579.500H1004M1027 579.500H1048.500M1035.500 579.500V610.500H998');
led(579.5, 'LED1302');
cap(965.5, 586.5, '', '', 579.5, 598);
cap(1048.5, 590.5, 'C1517', '100pF 0201', 579.5, 598);
term(927, 579.5);
term(997, 610.5);
bead(939, 579.5, 'FR01504');
[965.5, 1031.5, 1035.5].forEach(x => node(x, 579.5));
text(909, 581, 'VFLED+', 'black');
text(961, 576, '100mA线宽', 'note');
text(1001, 607, '100mA线宽', 'note');
text(978, 612, 'FLEDF-', 'black');
text(952, 592, 'C1508');
text(948, 597, 'NC 0402');

// Digital ground tie
path('M1162.500 715V702.500H1219.500V715');
path('M1158.500 715.500h8M1160 717.500h5M1161.500 719.500h2', RED);
gnd(1219.5, 715.5);
text(1169, 720, 'D_GND', 'black');

document.getElementById('schematic').innerHTML = out;
```
